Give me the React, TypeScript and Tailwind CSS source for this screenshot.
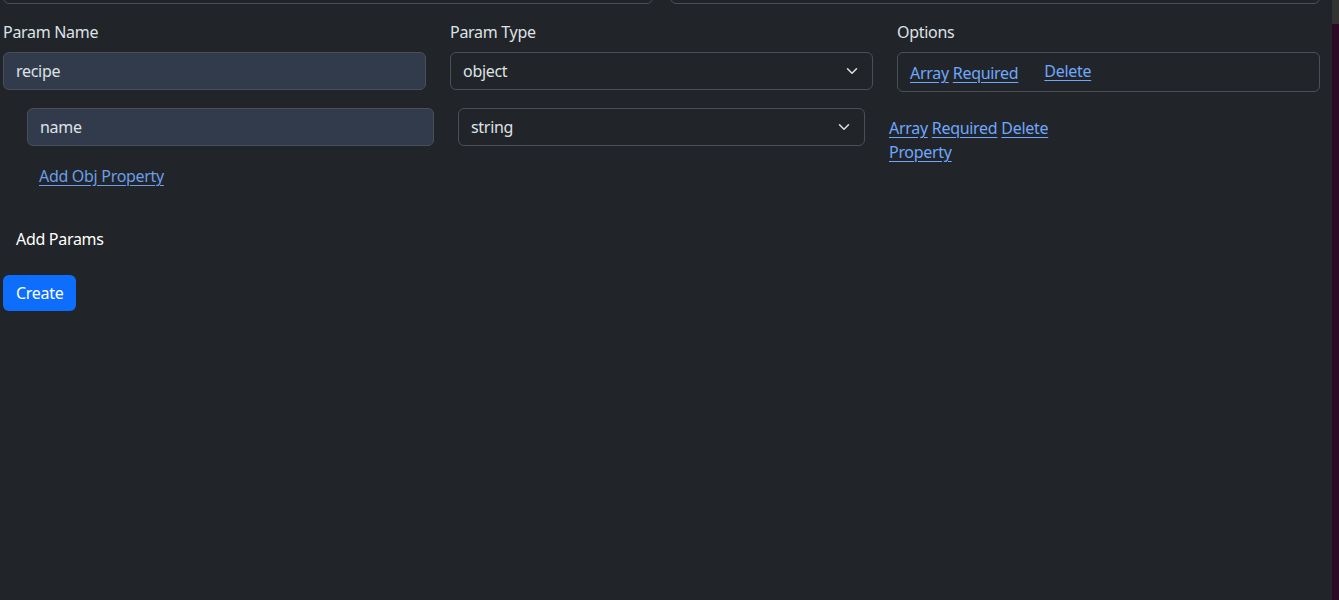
import React from "react"

const font = { fontFamily: '"Noto Sans", "Open Sans", sans-serif' }

function Chevron() {
  return (
    <svg width="16" height="12" viewBox="0 0 16 16" fill="none" className="absolute right-[12px] top-1/2 -translate-y-1/2">
      <path d="M2 5l6 6 6-6" stroke="#dee2e6" strokeWidth="2" strokeLinecap="round" strokeLinejoin="round" />
    </svg>
  )
}

function TextInput({ value }: { value: string }) {
  return (
    <div className="h-[38px] rounded-[6px] border border-[#495057] bg-[#323b4b] px-[12px] flex items-center text-[#dee2e6]">
      {value}
    </div>
  )
}

function Select({ value }: { value: string }) {
  return (
    <div className="relative h-[38px] rounded-[6px] border border-[#495057] bg-[#212529] px-[12px] flex items-center text-[#dee2e6]">
      {value}
      <Chevron />
    </div>
  )
}

export default function App() {
  return (
    <div style={font} className="flex w-[1339px] h-[600px] bg-[#212529] text-[16px] leading-[24px] tracking-[-0.3px] text-[#dee2e6] overflow-hidden">
      <div className="flex-1 flex flex-col pl-[3px] pr-[12px]">
        {/* bottoms of the inputs above the fold */}
        <div className="flex items-end gap-[17px] h-[4px] overflow-hidden">
          <div className="w-[650px] h-[38px] shrink-0 rounded-[6px] border border-[#495057]" />
          <div className="w-[650px] h-[38px] shrink-0 rounded-[6px] border border-[#495057]" />
        </div>

        {/* param row */}
        <div className="grid grid-cols-[423px_423px_423px] gap-x-[24px] mt-[16px]">
          <div>
            <div className="mb-[8px]">Param Name</div>
            <TextInput value="recipe" />
          </div>
          <div>
            <div className="mb-[8px]">Param Type</div>
            <Select value="object" />
          </div>
          <div>
            <div className="mb-[8px]">Options</div>
            <div className="h-[40px] rounded-[6px] border border-[#495057] px-[12px] flex items-center">
              <a className="text-[#6ea8fe] underline underline-offset-[3px] mt-[2px]">Array</a>
              <a className="text-[#6ea8fe] underline underline-offset-[3px] mt-[2px] ml-[4px]">Required</a>
              <a className="text-[#6ea8fe] underline underline-offset-[3px] ml-[26px] mt-[-2px]">Delete</a>
            </div>
          </div>
        </div>

        {/* object property row */}
        <div className="grid grid-cols-[407px_407px_170px] gap-x-[24px] mt-[16px] pl-[24px]">
          <TextInput value="name" />
          <Select value="string" />
          <div className="pt-[8px] flex flex-wrap gap-x-[4px] text-[#6ea8fe]">
            <a className="underline underline-offset-[3px]">Array</a>
            <a className="underline underline-offset-[3px]">Required</a>
            <a className="underline underline-offset-[3px]">Delete</a>
            <a className="underline underline-offset-[3px]">Property</a>
          </div>
        </div>

        <div className="pl-[36px]">
          <a className="text-[#6b9ee6] underline underline-offset-[3px]">Add Obj Property</a>
        </div>

        <div className="mt-[33px] px-[13px] py-[6px] self-start text-white">Add Params</div>

        <button className="mt-[18px] self-start h-[36px] px-[13px] rounded-[6px] bg-[#0d6efd] text-white">
          Create
        </button>
      </div>

      <div className="w-[7px] flex flex-col">
        <div className="h-[24px] bg-[#333333]" />
        <div className="flex-1 bg-[#2c0a24]" />
      </div>
    </div>
  )
}
